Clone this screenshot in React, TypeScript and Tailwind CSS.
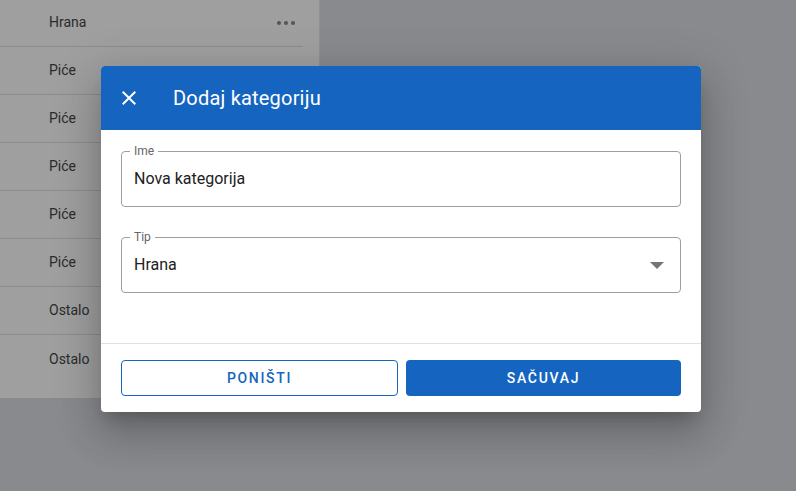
import React from "react";

const rows = ["Hrana", "Piće", "Piće", "Piće", "Piće", "Piće", "Ostalo", "Ostalo"];

export default function App() {
  return (
    <div
      className="relative w-[796px] h-[491px] overflow-hidden bg-[#898a8e]"
      style={{ fontFamily: "Roboto, 'Liberation Sans', sans-serif" }}
    >
      <div className="w-[320px] h-[399px] bg-[#9f9f9f] border-r border-[#8f8f92] -mt-[1px] flex flex-col">
        <div className="pr-4 flex flex-col">
          {rows.map((r, i) => (
            <div
              key={i}
              className={`h-[48px] flex items-center pl-[49px] pr-[8px] text-[14px] text-[#2b2b2b] ${
                i < rows.length - 1 ? "border-b border-[#8c8c8c]" : ""
              }`}
            >
              <span className="flex-1">{r}</span>
              {i === 0 && (
                <span className="flex gap-[3px] mr-[0px]">
                  <span className="w-[4px] h-[4px] rounded-full bg-[#555]" />
                  <span className="w-[4px] h-[4px] rounded-full bg-[#555]" />
                  <span className="w-[4px] h-[4px] rounded-full bg-[#555]" />
                </span>
              )}
            </div>
          ))}
        </div>
      </div>

      <div className="absolute left-[101px] top-[66px] w-[600px] bg-white rounded-[4px] shadow-[0_11px_15px_-7px_rgba(0,0,0,0.2),0_24px_38px_3px_rgba(0,0,0,0.14),0_9px_46px_8px_rgba(0,0,0,0.12)] overflow-hidden">
        <div className="h-[64px] bg-[#1565c0] flex items-center pl-[16px] text-white">
          <svg width="24" height="24" viewBox="0 0 24 24" fill="white">
            <path d="M19 6.41 17.59 5 12 10.59 6.41 5 5 6.41 10.59 12 5 17.59 6.41 19 12 13.41 17.59 19 19 17.59 13.41 12z" />
          </svg>
          <span className="ml-[32px] text-[20px] font-normal tracking-[0.01em]">Dodaj kategoriju</span>
        </div>
        <div className="px-[20px] pt-[21px] pb-[50px] flex flex-col gap-[30px]">
          <div className="relative h-[56px] border border-[#9e9e9e] rounded-[4px] flex items-center pl-[12px]">
            <span className="absolute -top-[8px] left-[8px] bg-white px-[4px] text-[12px] leading-[14px] text-[#666]">
              Ime
            </span>
            <span className="text-[16px] text-[#212121]">Nova kategorija</span>
          </div>
          <div className="relative h-[56px] border border-[#9e9e9e] rounded-[4px] flex items-center pl-[12px] pr-[16px]">
            <span className="absolute -top-[8px] left-[8px] bg-white px-[4px] text-[12px] leading-[14px] text-[#666]">
              Tip
            </span>
            <span className="flex-1 text-[16px] text-[#212121]">Hrana</span>
            <svg width="14" height="7" viewBox="0 0 14 7" fill="#757575">
              <path d="M0 0h14L7 7z" />
            </svg>
          </div>
        </div>
        <div className="border-t border-[#e0e0e0] px-[20px] pt-[16px] pb-[16px] flex gap-[8px]">
          <button className="flex-1 h-[36px] border border-[#1565c0] rounded-[4px] text-[#1565c0] text-[14px] font-medium tracking-[0.12em]">
            PONIŠTI
          </button>
          <button className="flex-1 h-[36px] bg-[#1565c0] rounded-[4px] text-white text-[14px] font-medium tracking-[0.12em]">
            SAČUVAJ
          </button>
        </div>
      </div>
    </div>
  );
}
